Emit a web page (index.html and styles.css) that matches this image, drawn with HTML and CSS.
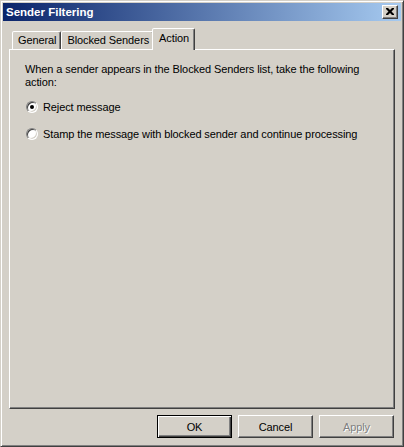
FILE: index.html
```html
<!DOCTYPE html>
<html>
<head>
<meta charset="utf-8">
<link rel="stylesheet" href="styles.css">
</head>
<body>
<div class="window">
  <div class="titlebar">
    <span class="title">Sender Filtering</span>
    <div class="close"><svg width="8" height="7" viewBox="0 0 8 7"><path d="M0 0h2l2 2 2-2h2v1l-2.5 2.5 2.5 2.5v1h-2l-2-2-2 2h-2v-1l2.5-2.5-2.5-2.5z" fill="#000"/></svg></div>
  </div>
  <div class="body">
    <div class="tabs">
      <div class="tab">General</div>
      <div class="tab">Blocked Senders</div>
      <div class="tab active">Action</div>
    </div>
    <div class="panel">
      <p class="intro">When a sender appears in the Blocked Senders list, take the following action:</p>
      <div class="option first"><span class="radio checked"></span><span>Reject message</span></div>
      <div class="option"><span class="radio"></span><span>Stamp the message with blocked sender and continue processing</span></div>
    </div>
    <div class="buttons">
      <div class="btn default">OK</div>
      <div class="btn">Cancel</div>
      <div class="btn disabled">Apply</div>
    </div>
  </div>
</div>
</body>
</html>
```
FILE: styles.css
```css
* { box-sizing: border-box; }
html, body { margin: 0; padding: 0; }
body {
  font-family: "Liberation Sans", Arial, sans-serif;
  font-size: 11px;
  letter-spacing: -0.1px;
  color: #000;
  background: #d4d0c8;
}
.window {
  width: 404px;
  height: 447px;
  background: #d4d0c8;
  border: 1px solid;
  border-color: #d4d0c8 #404040 #404040 #d4d0c8;
  box-shadow: inset 1px 1px #fff, inset -1px -1px #808080;
  padding: 2px;
}
.titlebar {
  height: 18px;
  background: linear-gradient(to right, #0a246a, #a6caf0);
  display: flex;
  align-items: center;
  justify-content: space-between;
  padding: 0 3px 0 3px;
}
.title {
  color: #fff;
  font-weight: bold;
  font-size: 11.5px;
  letter-spacing: 0;
}
.close {
  width: 16px;
  height: 14px;
  background: #d4d0c8;
  border: 1px solid;
  border-color: #fff #404040 #404040 #fff;
  box-shadow: inset -1px -1px #808080;
  display: flex;
  align-items: center;
  justify-content: center;
  padding-bottom: 1px;
}
.body {
  padding: 7px 6px 0 6px;
}
.tabs {
  height: 21px;
  display: flex;
  align-items: flex-end;
  padding-left: 3px;
  position: relative;
  z-index: 1;
}
.tab {
  height: 18px;
  padding: 2px 4px 0 5px;
  border: 1px solid;
  border-bottom: none;
  border-color: #fff #404040 transparent #fff;
  box-shadow: inset -1px 0 #808080;
  border-radius: 2px 2px 0 0;
  background: #d4d0c8;
}
.tab.active {
  height: 22px;
  margin: 0 -2px -1px -2px;
  padding: 3px 5px 0 6px;
  z-index: 2;
}
.panel {
  height: 360px;
  border: 1px solid;
  border-color: #fff #404040 #404040 #fff;
  box-shadow: inset -1px -1px #808080;
  padding: 13px 15px 0 15px;
}
.intro {
  margin: 0;
  line-height: 13px;
}
.option {
  display: flex;
  align-items: center;
  margin-top: 14px;
  padding-left: 1px;
  height: 13px;
}
.option.first { margin-top: 11px; }
.radio {
  width: 12px;
  height: 12px;
  border-radius: 50%;
  background: #fff;
  border: 1px solid;
  border-color: #808080 #fff #fff #808080;
  box-shadow: inset 1px 1px #404040, inset -1px -1px #d4d0c8;
  margin-right: 5px;
  display: flex;
  align-items: center;
  justify-content: center;
  flex: none;
}
.radio.checked::after {
  content: "";
  width: 4px;
  height: 4px;
  border-radius: 50%;
  background: #000;
}
.buttons {
  display: flex;
  justify-content: flex-end;
  gap: 6px;
  margin-top: 6px;
  padding-right: 1px;
}
.btn {
  width: 75px;
  height: 23px;
  border: 1px solid;
  border-color: #fff #404040 #404040 #fff;
  box-shadow: inset -1px -1px #808080;
  display: flex;
  align-items: center;
  justify-content: center;
}
.btn.default {
  border: 1px solid #000;
  box-shadow: inset 1px 1px #fff, inset -1px -1px #404040, inset -2px -2px #808080;
}
.btn.disabled {
  color: #808080;
  text-shadow: 1px 1px #fff;
}
```
